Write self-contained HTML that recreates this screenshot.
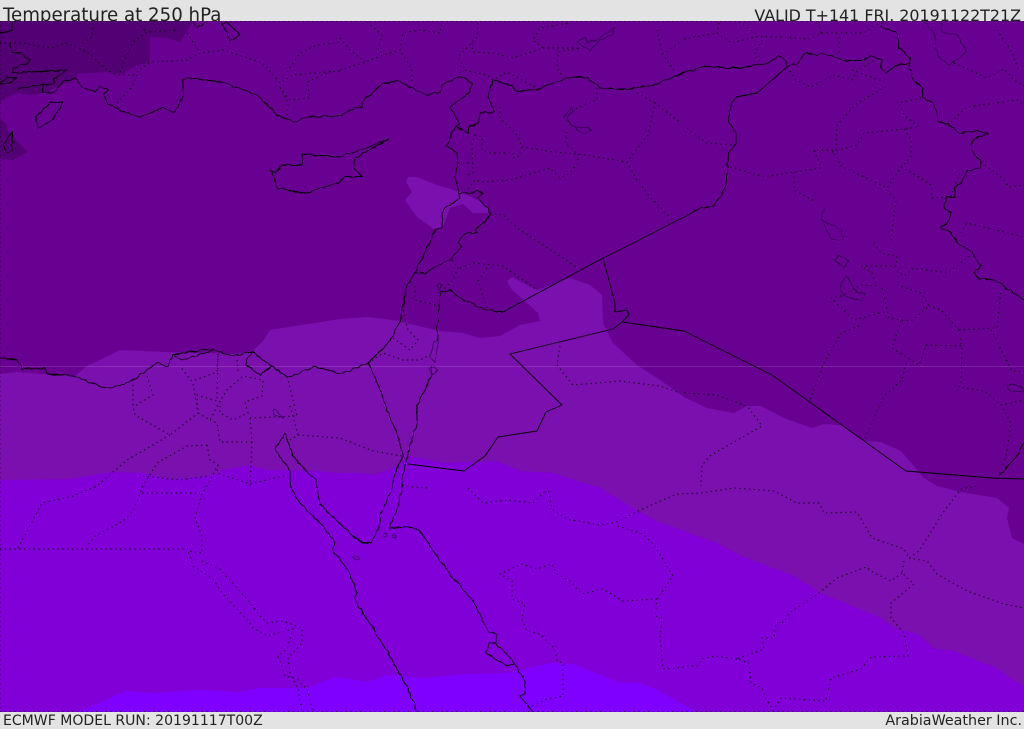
<!DOCTYPE html>
<html><head><meta charset="utf-8"><title>Temperature at 250 hPa</title>
<style>
html,body{margin:0;padding:0;background:#e3e3e3}
#w{position:relative;width:1024px;height:729px;overflow:hidden;background:#e3e3e3;font-family:"DejaVu Sans",sans-serif;color:#222}
.t{position:absolute;white-space:nowrap;line-height:1}
svg{position:absolute;left:0;top:21px}
.s{fill:none;stroke:#000;stroke-width:.9;stroke-linejoin:round}
.h{fill:none;stroke:#1a0030;stroke-width:.6;stroke-linejoin:round}
.d{fill:none;stroke:#000;stroke-width:1.15;stroke-dasharray:1.3 3.5;stroke-linejoin:round;opacity:.85}
</style></head><body><div id="w">
<div class="t" style="left:3px;top:7px;font-size:18.2px">Temperature at 250 hPa</div>
<div class="t" style="right:3px;top:8px;font-size:15.9px">VALID T+141 FRI. 20191122T21Z</div>
<div class="t" style="left:3px;top:714px;font-size:14.05px">ECMWF MODEL RUN: 20191117T00Z</div>
<div class="t" style="right:2px;top:714px;font-size:14.3px">ArabiaWeather Inc.</div>
<svg width="1024" height="691" viewBox="0 21 1024 691">
<defs><filter id="c" filterUnits="userSpaceOnUse" x="-10" y="0" width="1044" height="740"><feTurbulence type="fractalNoise" baseFrequency=".16" numOctaves="2" seed="4"/><feDisplacementMap in="SourceGraphic" scale="3.5" xChannelSelector="R" yChannelSelector="G"/></filter></defs>
<rect x="0" y="21" width="1024" height="691" fill="#680091"/>
<g fill="#520074">
<polygon points="0,21 193,21 180,42 167,38 150,37 150,62 133,67 123,74 107,72 77,74 75,80 67,83 43,93 32,95 17,93 2,100 0,105"/>
<polygon points="0,118 7,125 7,130 28,152 13,160 0,159"/>
</g>
<polygon fill="#7a10ad" points="408,177 406,182 412,192 405,200 417,217 435,230 443,227 450,208 463,204 473,213 488,213 488,208 478,200 460,192 437,185 417,177"/>
<polygon fill="#7a10ad" points="0,374 17,372 43,374 75,376 87,366 110,355 120,350 167,352 213,353 233,354 253,351 263,341 270,330 340,319 367,317 393,320 440,331 463,333 480,338 500,336 520,325 540,321 538,313 527,303 512,290 507,281 512,277 537,290 570,278 590,285 602,295 603,323 613,343 637,365 660,380 684,397 707,408 734,413 747,406 761,406 784,418 812,428 824,424 841,425 864,441 881,442 901,451 924,478 937,486 961,492 997,498 1009,508 1007,518 1012,538 1024,544 1024,712 0,712"/>
<polygon fill="#8000d7" points="1024,686 1007,676 997,668 951,650 934,649 921,636 911,632 894,628 881,618 821,593 794,576 741,556 717,543 684,531 657,521 633,508 597,486 593,486 553,473 520,471 497,461 467,462 443,463 410,456 397,466 373,475 360,473 340,473 317,471 287,470 267,470 250,465 223,470 213,475 200,477 170,479 143,473 113,472 70,479 0,480 0,712 1024,712"/>
<polygon fill="#7f00ff" points="77,712 97,704 125,691 153,693 200,690 240,692 260,688 307,688 317,684 333,678 340,677 367,682 387,675 423,678 467,674 507,673 550,663 573,664 617,682 640,683 660,691 680,703 684,706 697,712"/>
<line x1="0" y1="366.5" x2="1024" y2="366.5" stroke="#fff" stroke-opacity=".13" stroke-width="1"/>
<g class="d">
<path d="M0 21V712M0 21.5H1024M0 711.5H1024" stroke-width=".8"/>
<polyline points="0,43 23,43 50,48 67,43 87,52 107,70 117,75 133,75 150,62 187,60 200,53 223,50 263,63 280,83 293,75 340,71"/>
<polyline points="93,23 92,37 80,45"/><polyline points="120,72 132,43 147,32 175,30"/><polyline points="137,23 147,32"/><polyline points="187,33 200,53"/><polyline points="117,103 132,87 137,75"/>
<polyline points="280,87 288,103 287,117"/><polyline points="287,72 300,53 317,45 340,42"/><polyline points="280,88 290,100 310,98 307,82 333,70"/>
<polyline points="340,70 363,63 383,55 400,50 412,70 412,83"/><polyline points="400,50 403,33 420,30 440,33 442,22"/><polyline points="367,22 382,35 378,50 383,53"/><polyline points="340,38 350,50 365,62"/>
<polyline points="478,23 477,37 458,57 465,70 457,77"/><polyline points="465,70 487,75 493,80 507,72 537,88"/><polyline points="472,43 473,52 493,53 513,58 543,48 533,40 540,28 570,23"/><polyline points="543,48 580,48 558,52 557,67 563,78"/>
<polyline points="657,30 662,53 675,72"/><polyline points="667,52 680,42"/><polyline points="597,88 597,100 573,110"/>
<polyline points="500,107 500,118 517,135 522,147 518,157 513,158 513,153 490,153 482,150 482,137 475,135 472,143 473,173 468,175"/>
<polyline points="522,147 553,152 578,154 627,162 648,135 655,103 680,122"/><polyline points="637,93 655,103"/>
<polyline points="578,154 578,163 570,173 560,178 550,168 510,180 483,182 475,180 467,190"/>
<polyline points="627,162 637,180 650,197 673,220"/><polyline points="567,132 565,143 578,154"/><polyline points="458,163 472,163"/>
<polyline points="490,213 503,215 520,230 540,243 560,256 577,268"/>
<polyline points="684,39 717,33 731,43 759,36 811,39 821,33 864,33 879,23"/><polyline points="739,22 759,36"/><polyline points="819,22 821,33"/><polyline points="719,23 717,33"/><polyline points="762,40 754,55 761,62"/><polyline points="839,37 839,55"/>
<polyline points="787,67 796,80 811,87 834,75 852,80 856,72 877,58"/><polyline points="852,70 884,82"/>
<polyline points="886,87 857,103 837,125 836,150 814,150 821,168 794,172 764,177 727,166"/><polyline points="794,172 794,190 816,202"/><polyline points="687,128 707,143 734,145"/>
<polyline points="832,152 857,145 864,133 904,129 919,127 904,115 899,103 921,98"/>
<polyline points="904,129 911,140 911,157 901,167 887,188 839,165 839,160 832,152"/>
<polyline points="901,167 919,177 931,185 932,198 951,197 961,170"/><polyline points="887,190 896,200 894,213 891,243"/>
<polyline points="951,122 967,107 1017,100 1024,105"/><polyline points="981,162 1001,177 1009,187 1024,185"/><polyline points="954,63 987,78 1004,69 1014,80 1024,86"/><polyline points="997,30 1012,52 1019,72"/><polyline points="961,233 967,223 1024,237"/>
<polyline points="874,243 881,253 897,256 896,266 881,266 861,266 872,273 877,286 861,285 841,296 831,298 854,320 887,311"/>
<polyline points="897,271 904,276 914,268 947,273 971,255"/><polyline points="897,285 921,293 929,306 911,321 901,320 889,318 882,288"/>
<polyline points="929,306 941,310 959,330 962,350 961,383 959,387 984,391 1001,405 1011,423 1006,456 999,476"/>
<polyline points="901,321 897,333 892,348 919,365 926,345 961,346"/><polyline points="959,330 997,328 1001,290"/><polyline points="991,330 1012,371 1024,372"/>
<polyline points="906,363 902,380 884,396 864,440"/><polyline points="859,326 841,333 824,363 809,403"/><polyline points="1001,405 1024,400"/>
<polyline points="684,393 717,395 747,406 762,426 711,455 702,465 701,486"/>
<polyline points="452,260 458,268 453,280 440,293"/><polyline points="460,268 473,263 503,266 537,290"/><polyline points="487,268 478,281 487,308"/><polyline points="415,286 415,300 440,306"/>
<polyline points="403,310 408,330 418,340 410,350 393,338"/><polyline points="368,363 383,353 403,360 420,360 430,355"/>
<polyline points="560,346 557,365 573,385 620,381 660,386 680,393"/>
<polyline points="298,435 340,438 373,451 402,456"/>
<polyline points="133,380 133,406 135,415 170,435 198,413 193,383 180,366"/><polyline points="147,376 153,395 135,406"/>
<polyline points="195,380 217,372 218,353 217,401 197,395 198,413 210,420 220,401"/>
<polyline points="220,401 220,413 233,420 248,413 245,402 262,396 263,380 243,376 227,390 220,401"/><polyline points="237,360 238,371"/>
<polyline points="250,418 297,416 287,376"/><polyline points="290,406 298,435 290,440"/><polyline points="210,420 217,423 220,442 252,442 250,418"/>
<polyline points="252,442 250,486"/><polyline points="170,435 127,460 97,486 73,496 42,503 18,548"/>
<polyline points="207,445 187,446 157,463 143,486 133,511 123,521 95,536 87,546"/>
<polyline points="207,445 210,460 218,465 207,486 202,494"/><polyline points="218,465 217,473 250,484 287,475"/><polyline points="143,476 180,480 208,476"/>
<polyline points="142,493 200,493"/><polyline points="202,494 195,518 202,536 202,553 188,551 193,566 213,579 222,593 248,621 253,628 267,636 293,629 287,649 278,656 285,676 297,679 307,689 313,712"/>
<polyline points="202,561 220,569 247,599 260,616 267,623 283,621 302,628 302,643 288,658 290,673 298,689 302,712"/>
<polyline points="0,549 188,549"/>
<polyline points="402,486 427,488"/><polyline points="468,488 483,503 507,500 533,503 548,488 552,509 567,519 600,525 617,522 640,510 677,494 701,493 734,488 774,491 797,503 819,503 824,513 857,512 872,538 904,549 909,558 919,551 942,514 961,489 977,486"/>
<polyline points="909,558 927,561 937,574 967,591 1004,604 1024,608"/>
<polyline points="904,561 902,573 914,584 891,603 891,618 904,633 908,656 871,657 861,669 831,678 826,701 781,698 772,712"/>
<polyline points="902,573 891,581 874,573 866,567 837,578 819,593 789,613 784,622 776,623 774,638 762,638 764,649 737,659 749,663 751,683 762,688 766,699 772,708"/>
<polyline points="737,659 714,656 702,659 697,666 687,666 677,668 663,669 660,639 662,618 655,616 657,599 673,576 655,546 643,534 617,526"/>
<polyline points="657,599 623,601 603,589 582,594 570,581 557,574 552,564 537,569 522,564 500,574 512,581 512,599 525,604 522,619 527,631 540,634 555,649 557,661 563,663 563,696 547,699 532,706"/>
</g>
<g class="s">
<polyline points="684,217 633,243 603,258 503,312"/>
<polyline points="603,258 615,303 615,312 627,310 629,315 622,322 613,329 510,354 562,405 546,412 537,431 498,437 485,456 464,471 408,464"/>
<polyline points="622,322 684,331 772,375 906,471 992,478 1024,479"/>
<polyline points="787,67 757,93 736,97"/>
</g>
<g class="s" filter="url(#c)">
<polyline points="75,78 82,87 95,92 100,86 108,90 103,95 108,103 120,110 132,115 140,117 163,108 175,112 180,103 183,93 183,80 190,78 222,82 257,95 277,115 295,122 307,117 340,116 355,108 362,107 363,102 383,83 398,81 427,95 440,92 442,85 460,76 472,83 470,92 450,107 459,123 452,132 447,145 457,153 458,163 455,177 459,193 460,198 443,210 442,227 435,230 430,243 415,272 407,286 400,321 390,341 368,363 340,374 330,370 313,367 293,376 287,377 272,366 252,352 248,352 233,356 208,349 192,352 173,355 168,366 157,363 133,380 112,388 103,388 75,376 47,374 44,368 23,369 17,360 0,358"/>
<polyline points="252,352 245,364 260,375 272,366"/><polyline points="173,355 182,360 208,352 213,349"/>
<polyline points="459,127 457,127 468,133 469,126 478,124 480,113 495,112 488,98 493,80 512,85 515,91 537,90 547,85 573,77 587,78 600,88 627,89 653,85 684,73 704,66 727,68 741,68 769,63 779,56 786,61 787,67 797,64 806,53 816,55 822,53 844,60 861,61 871,56 882,60 881,68 886,73 897,65 911,63"/>
<polyline points="736,97 729,110 729,122 736,133 736,143 729,153 727,165 727,185 714,206 701,208 684,217"/>
<polyline points="503,312 483,309 465,301 450,290 440,293 437,330 438,340"/>
<polyline points="432,366 432,375 417,406 417,423 408,453"/>
<polyline points="415,272 425,274 437,265 450,260 462,246 458,242 465,233 478,233 475,230 491,215 487,208 478,198 483,194 477,191 473,193 459,193"/>
<polyline points="999,476 1017,456 1024,443"/>
<polyline points="881,21 882,27 897,33 899,48 911,58 909,68 914,80 923,88 922,97 934,103 939,123 947,123 959,133 977,131 989,133 972,140 971,150 981,162 980,168 966,172 962,182 954,188 956,197 947,197 944,207 951,213 949,220 941,228 951,232 957,243 971,251 981,266 974,273 979,279 994,280 1024,300"/>
<polyline points="368,363 383,396 387,411 397,433 403,456"/>
<polyline points="408,454 403,473 402,486 398,506 390,526 390,531"/><polyline points="403,456 395,473 392,486 390,493 380,516 380,523 372,543 362,543 340,524"/>
<polyline points="285,433 275,450 290,470 290,486 300,503 323,526 335,543 333,551 340,559 350,574 357,593 355,601 373,628 390,656 408,689 417,712"/>
<polyline points="285,433 293,456 315,480 320,504 340,524"/>
<polyline points="390,528 412,527 420,531 435,553 450,574 475,604 488,631 497,634 495,643 502,649 515,664 525,681 525,694 520,696 533,712"/>
<polyline points="495,643 490,643 486,653 507,666 515,664"/>
<polyline points="340,157 303,154 302,165 283,165 275,173 270,170 278,188 295,192 307,193 340,182 345,177 363,177 353,168 355,158 388,140 340,157"/>
<polyline points="63,102 50,103 36,117 38,128 53,120 63,102"/><polyline points="12,132 3,145 7,153 12,150 12,132"/>
<polyline points="12,22 13,30 0,33"/><polyline points="10,43 12,53 20,53 30,60 28,63 13,68 13,73 67,70 53,80 55,83 20,88 18,90"/>
<polyline points="75,78 63,82 57,90 50,93 42,92 44,84"/><polyline points="0,83 7,78 17,78 10,83 0,84"/>
<polyline points="222,23 228,23 240,35 230,41 222,23"/><polyline points="193,22 198,28 205,22"/>
</g>
<g class="h" filter="url(#c)">
<polyline points="577,42 585,38 587,43 597,40 607,33 615,27 612,35 597,42 590,50 577,42"/>
<polyline points="572,107 573,110 567,117 573,127 585,127 592,130 582,134 570,123 564,117 572,107"/>
<polyline points="924,22 934,33 937,55 949,65 967,52 957,35 942,32 942,22"/>
<polyline points="824,208 822,220 841,230 844,240 831,239 822,220"/>
<polyline points="841,283 847,276 857,293 866,293 861,301 842,296 841,283"/>
<polyline points="834,260 839,255 849,261 844,267 834,260"/>
<polyline points="438,340 435,341 430,356 435,363 438,343 438,340"/><polyline points="439,283 437,285 439,291 442,286 439,283"/><polyline points="428,368 432,375 437,371 435,367 428,368"/>
<polyline points="272,411 275,408 283,418 273,415 272,411"/>
<ellipse cx="356" cy="558" rx="3" ry="1.5"/><ellipse cx="385" cy="535" rx="2" ry="2"/><ellipse cx="394" cy="536" rx="2" ry="1.5"/>
<polyline points="1007,386 1012,384 1020,386 1023,392 1010,392 1007,386"/>
</g>
</svg>
</div></body></html>
